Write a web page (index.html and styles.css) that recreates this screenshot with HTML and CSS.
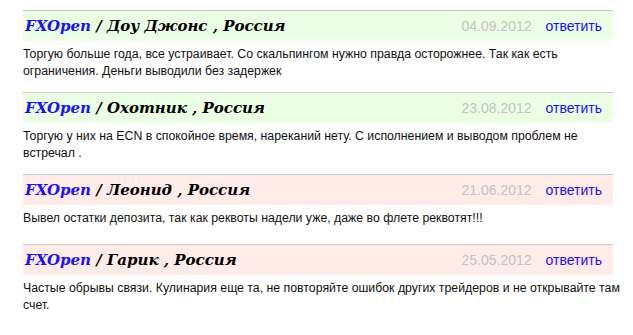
FILE: index.html
```html
<!DOCTYPE html>
<html>
    <head>
        <title>отзывы</title>
        <meta charset="utf-8">
        <link rel="stylesheet" href="styles.css">
    </head>
    <body>
        <div class="reviews">
            <div class="review good">
                <div class="head">
                    <span class="who"><a class="broker" href="#">FXOpen</a> / Доу Джонс , Россия</span>
                    <span class="date">04.09.2012</span>
                    <a class="reply" href="#">ответить</a>
                </div>
                <p class="text">Торгую больше года, все устраивает. Со скальпингом нужно правда осторожнее. Так как есть ограничения. Деньги выводили без задержек</p>
            </div>
            <div class="review good">
                <div class="head">
                    <span class="who"><a class="broker" href="#">FXOpen</a> / Охотник , Россия</span>
                    <span class="date">23.08.2012</span>
                    <a class="reply" href="#">ответить</a>
                </div>
                <p class="text">Торгую у них на ECN в спокойное время, нареканий нету. С исполнением и выводом проблем не<br>встречал .</p>
            </div>
            <div class="review bad">
                <div class="head">
                    <span class="who"><a class="broker" href="#">FXOpen</a> / Леонид , Россия</span>
                    <span class="date">21.06.2012</span>
                    <a class="reply" href="#">ответить</a>
                </div>
                <p class="text">Вывел остатки депозита, так как реквоты надели уже, даже во флете реквотят!!!</p>
            </div>
            <div class="review bad">
                <div class="head">
                    <span class="who"><a class="broker" href="#">FXOpen</a> / Гарик , Россия</span>
                    <span class="date">25.05.2012</span>
                    <a class="reply" href="#">ответить</a>
                </div>
                <p class="text">Частые обрывы связи. Кулинария еще та, не повторяйте ошибок других трейдеров и не открывайте там счет.</p>
            </div>
        </div>
    </body>
</html>
```

FILE: styles.css
```css
* {
    margin: 0px;
    padding: 0px;
}
body {
    background: #fff;
    font-family: "Liberation Sans", Arial, sans-serif;
}
.reviews {
    width: 590px;
    padding: 10px 0 0 23px;
}
.review {
    border-top: 1px solid #c8c8c8;
}
.head {
    height: 30px;
    display: flex;
    align-items: center;
    padding: 0 11px 0 2px;
}
.good .head {
    background: #ebffe5;
}
.bad .head {
    background: #ffebe8;
}
.who {
    flex: 1;
    font-family: "DejaVu Serif", Georgia, serif;
    font-style: italic;
    font-weight: bold;
    font-size: 15px;
    color: #000;
}
.broker {
    color: #1a10ff;
    text-decoration: none;
}
.date {
    color: #c3c3c3;
    font-size: 14px;
    margin-right: 14px;
}
.reply {
    color: #1a10ff;
    font-size: 14px;
    text-decoration: none;
}
.text {
    font-size: 12.3px;
    line-height: 17px;
    color: #111;
    padding: 5px 0 12px;
    margin-right: -10px;
    min-height: 22px;
}
```
